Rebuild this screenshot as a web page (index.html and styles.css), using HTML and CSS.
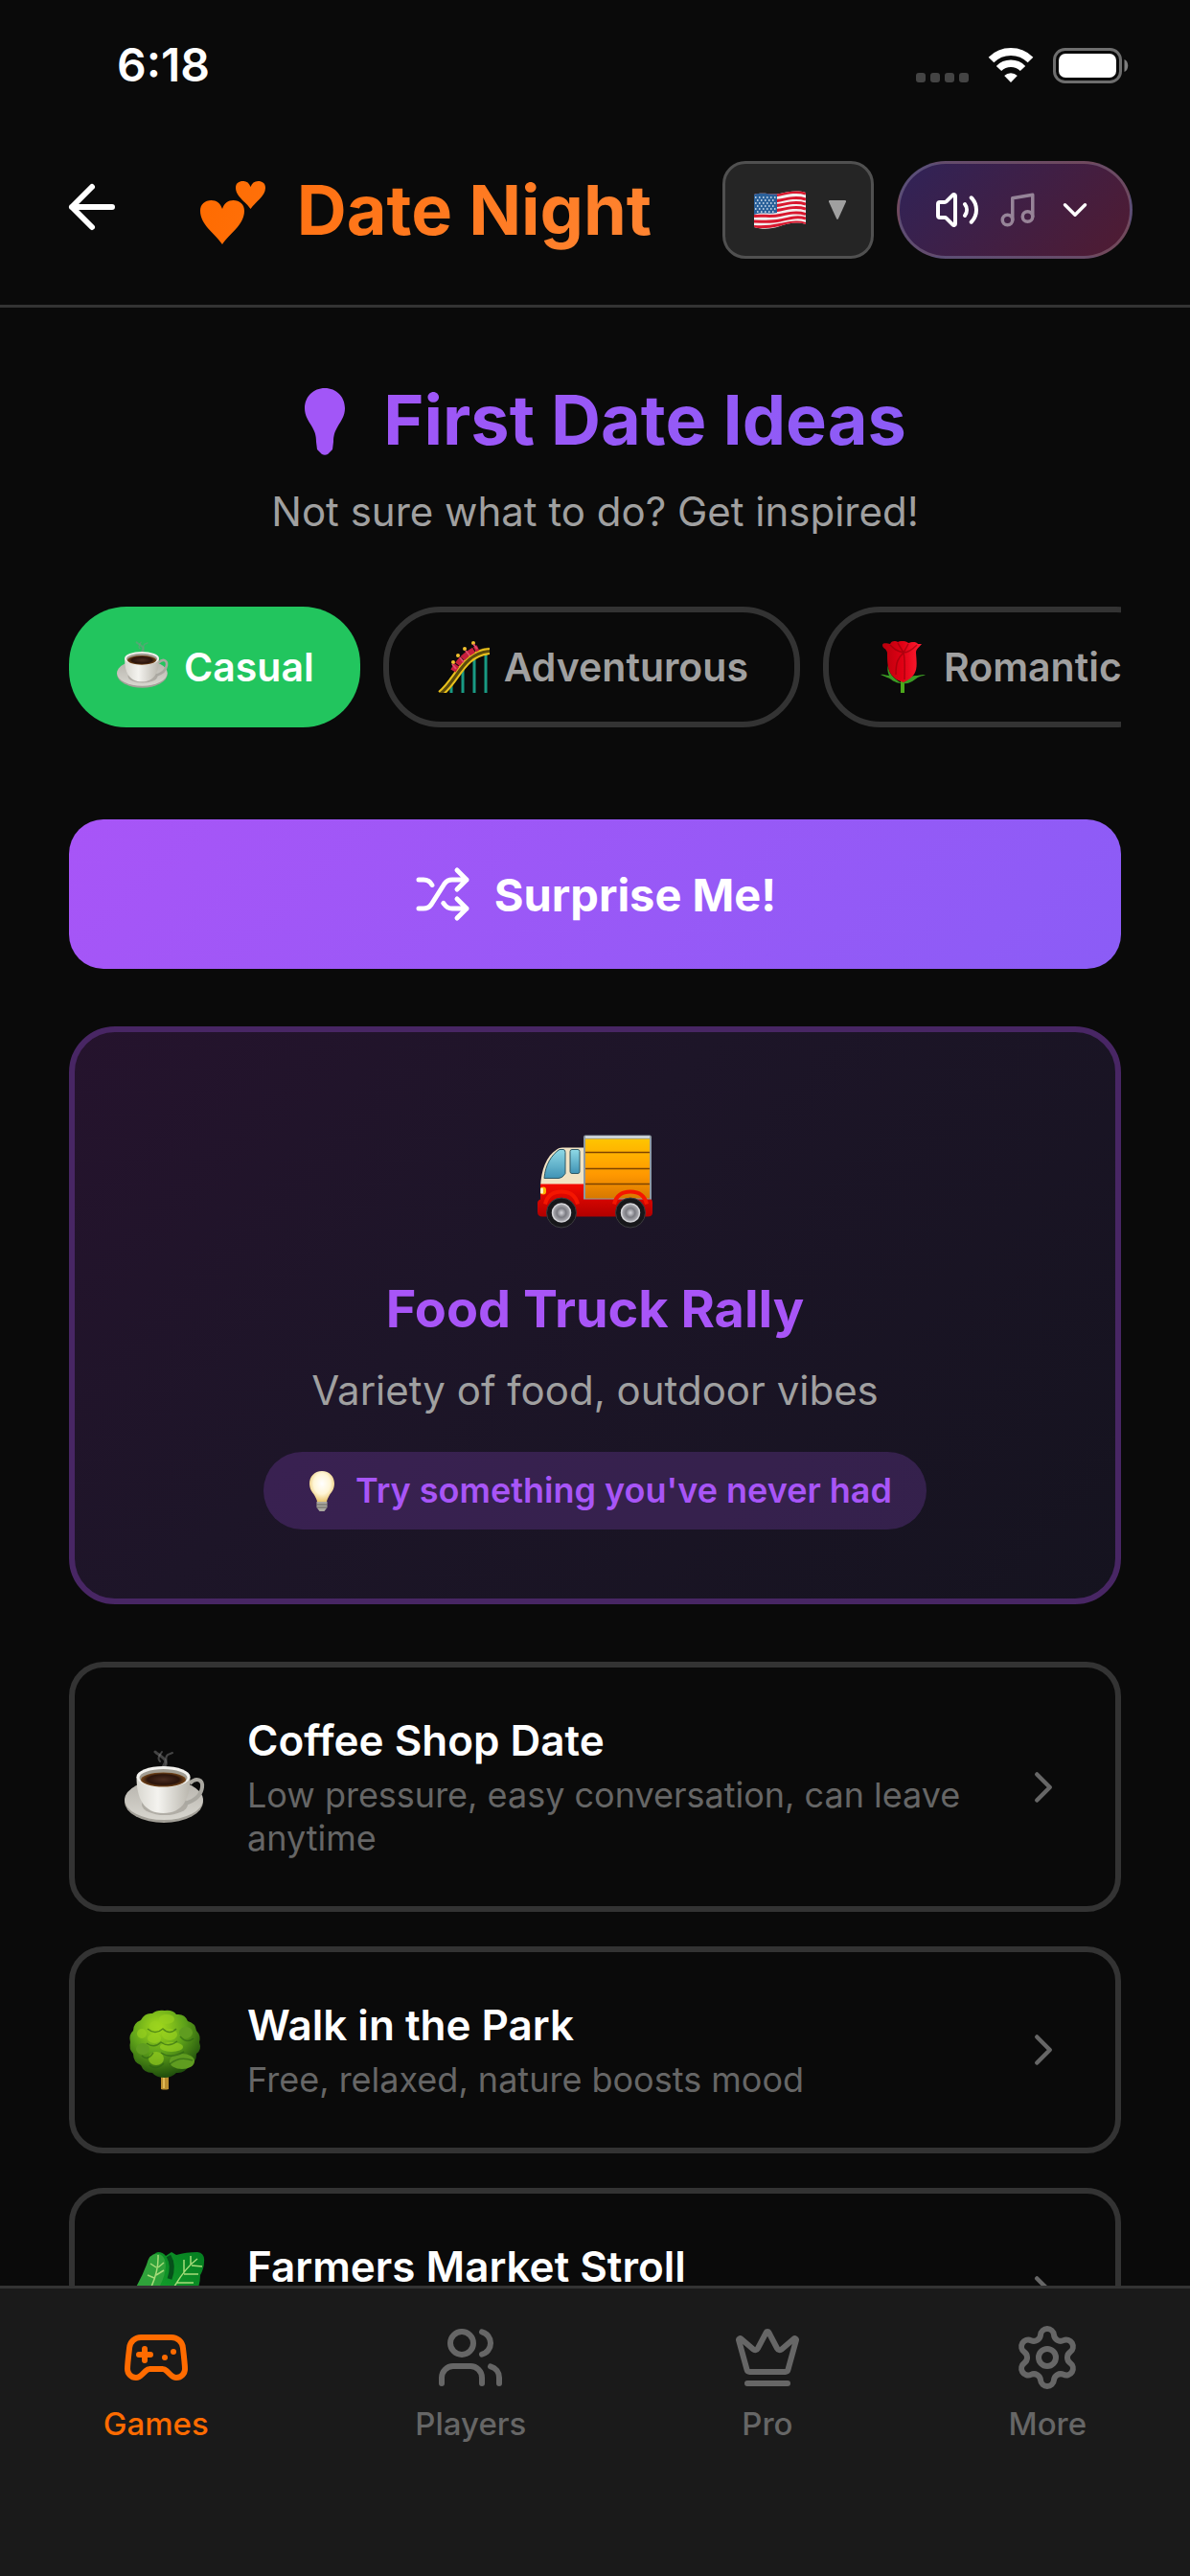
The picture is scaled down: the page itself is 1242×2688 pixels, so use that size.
FILE: index.html
```html
<!DOCTYPE html>
<html lang="en">
<head>
<meta charset="utf-8">
<meta name="viewport" content="width=device-width, initial-scale=1">
<title>Date Night</title>
<link rel="stylesheet" href="styles.css">
</head>
<body>
<svg class="sprite" width="0" height="0" aria-hidden="true">
  <defs>
    <linearGradient id="g-hearts" gradientUnits="userSpaceOnUse" x1="0" y1="0" x2="400" y2="60"><stop offset="0" stop-color="#ff6b00"/><stop offset="1" stop-color="#ff8533"/></linearGradient>
    <linearGradient id="g-cup" x1="0" x2="1"><stop offset="0" stop-color="#d9d7d0"/><stop offset=".4" stop-color="#f4f3ef"/><stop offset="1" stop-color="#b9b6ad"/></linearGradient>
    <linearGradient id="g-saucer" x1="0" x2="0" y1="0" y2="1"><stop offset="0" stop-color="#b5b2ab"/><stop offset="1" stop-color="#d8d6cf"/></linearGradient>
    <radialGradient id="g-coffee"><stop offset="0" stop-color="#4a2c20"/><stop offset=".7" stop-color="#2b140b"/><stop offset="1" stop-color="#7a4a1c"/></radialGradient>
    <linearGradient id="g-box" x1="0" x2="0" y1="0" y2="1"><stop offset="0" stop-color="#ffc400"/><stop offset=".6" stop-color="#ff9800"/><stop offset="1" stop-color="#d77800"/></linearGradient>
    <linearGradient id="g-red" x1="0" x2="0" y1="0" y2="1"><stop offset="0" stop-color="#f50a00"/><stop offset="1" stop-color="#b00000"/></linearGradient>
    <linearGradient id="g-glass" x1="0" x2="0" y1="0" y2="1"><stop offset="0" stop-color="#8fd9e6"/><stop offset="1" stop-color="#3f93b5"/></linearGradient>
    <radialGradient id="g-hub"><stop offset="0" stop-color="#d5d5da"/><stop offset=".5" stop-color="#7b7b82"/><stop offset="1" stop-color="#b6b6bb"/></radialGradient>
    <radialGradient id="g-bulb" cx=".5" cy=".4" r=".6"><stop offset="0" stop-color="#ffffff"/><stop offset=".55" stop-color="#fff6d6"/><stop offset="1" stop-color="#e6bf62"/></radialGradient>
    <radialGradient id="g-tree" cx=".4" cy=".25" r=".75"><stop offset="0" stop-color="#a6dc1c"/><stop offset=".5" stop-color="#5fa31a"/><stop offset="1" stop-color="#1e4d0c"/></radialGradient>
    <linearGradient id="g-leaf" x1="1" x2="0" y1="0" y2="1"><stop offset="0" stop-color="#047d20"/><stop offset=".6" stop-color="#149f2b"/><stop offset="1" stop-color="#b5e67c"/></linearGradient>
    <linearGradient id="g-rose" x1="0" x2="1"><stop offset="0" stop-color="#b8000c"/><stop offset=".5" stop-color="#e00014"/><stop offset="1" stop-color="#ff1f33"/></linearGradient>
  </defs>
  <symbol id="cup" viewBox="0 0 84 78">
    <g fill="none" stroke="#8c8c8c" stroke-opacity=".45" stroke-linecap="round"><path d="M41 22c-4-6 5-8 0-13s-6-4-9-7" stroke-width="3"/><path d="M42 18c5-5-2-8 3-13l5-2M37 12c-3-3-1-6 2-10" stroke-width="2"/></g>
    <ellipse cx="41" cy="54" rx="41" ry="22" fill="#a3a098"/><ellipse cx="41" cy="52" rx="41" ry="21" fill="url(#g-saucer)"/>
    <ellipse cx="42" cy="57" rx="24" ry="11" fill="#8f8c84" opacity=".5"/>
    <path d="M68 35c7-7 14-4 13 4s-8 14-18 17" fill="none" stroke="#aaa8a1" stroke-width="4"/>
    <path d="M12.500 28c0 22 7 38 28 38s28-16 28-38z" fill="url(#g-cup)"/>
    <ellipse cx="40.500" cy="28" rx="28" ry="11" fill="#f3f2ee"/><ellipse cx="40.500" cy="29" rx="25" ry="9" fill="#a19d93"/><ellipse cx="40.500" cy="31" rx="23.500" ry="7.500" fill="url(#g-coffee)"/>
  </symbol>
  <symbol id="bulb-shape" viewBox="0 0 42 70">
    <path d="M21 0C9 0 0 9 0 21c0 8 4 13 7.500 19S12 50 12 56l1 8 5 5c2 1 4 1 6 0l5-5 1-8c0-6 1-10 4.500-16S42 29 42 21C42 9 33 0 21 0z"/>
  </symbol>
</svg>

<div class="status-bar">
  <time class="clock">6:18</time>
  <div class="status-icons">
    <svg width="55" height="37" viewBox="0 0 55 37" fill="#444" aria-hidden="true"><rect y="26" width="10" height="10" rx="3"/><rect x="15" y="26" width="10" height="10" rx="3"/><rect x="30" y="26" width="10" height="10" rx="3"/><rect x="45" y="26" width="10" height="10" rx="3"/></svg>
    <svg width="48" height="37" viewBox="0 0 48 37" aria-hidden="true"><g fill="none" stroke="#fff"><path d="M3.500 12.500a29 29 0 0 1 41 0" stroke-width="8"/><path d="M11.500 21.500a17.500 17.500 0 0 1 25 0" stroke-width="7.500"/></g><path d="M17.200 29a10 10 0 0 1 13.600 0L24 36z" fill="#fff"/></svg>
    <svg width="79" height="37" viewBox="0 0 79 37" aria-hidden="true"><rect x="1.500" y="1.500" width="69" height="34" rx="11" fill="none" stroke="#6e6e6e" stroke-width="3"/><rect x="6" y="6" width="60" height="25" rx="7" fill="#fff"/><path d="M74.500 12c5 1.500 5 11.500 0 13z" fill="#7e7e7e"/></svg>
  </div>
</div>

<header class="app-header">
  <button class="back" type="button" aria-label="Back"><svg class="line" viewBox="0 0 24 24"><path d="m12 19-7-7 7-7M19 12H5"/></svg></button>
  <h1 class="app-title">
    <svg class="title-icon" viewBox="0 0 82 72" fill="url(#g-hearts)" aria-hidden="true"><path d="M26 72C19 61 3 52 3 37c0-7 5-11 11.500-11C20 26 24 29 26 35c2-6 6-9 11.500-9C44 26 49 30 49 37c0 15-16 24-23 35z"/><path d="M55.500 35C51 28 40 22 40 13c0-5 3.500-7 7.500-7s6.500 2 8 6c1.500-4 4-6 8-6s7.500 2 7.500 7c0 9-11 15-15.500 22z"/></svg>
    <span class="orange-text">Date Night</span>
  </h1>
  <div class="header-actions">
    <button class="language" type="button" aria-label="Language: English (US)" aria-haspopup="listbox">
      <svg width="54" height="40" viewBox="0 0 54 40" aria-hidden="true">
        <clipPath id="flag-clip"><path d="M0 4c10-3 18 1 27-1s18-4 27-1v33c-10-3-18-1-27 2s-18 4-27 1z"/></clipPath>
        <g clip-path="url(#flag-clip)"><rect width="54" height="40" fill="#f3eeee"/>
        <g fill="none" stroke="#d8172e" stroke-width="3"><path d="M0 5c10-3 18 1 27-1s18-4 27-1M0 11c10-3 18 1 27-1s18-4 27-1M0 16c10-3 18 1 27-1s18-4 27-1M0 21c10-3 18 1 27-1s18-4 27-1M0 26.500c10-1 18 1 27-1s18-4 27-1M0 32c10 0 18 1 27-1s18-5 27-2M0 37.500c10 1 18 0 27-2s18-4 27-1"/></g>
        <path d="M0 2c8-1 16 2 24 0v21c-8 2-16-1-24 2z" fill="#2a6099"/>
        <g stroke="#dfe9f3" stroke-width="1.500" stroke-dasharray="1.500 2.500"><path d="M1 7h22M3 10h20M1 13h22M3 16h20M1 19h22M3 22h20"/></g></g>
      </svg>
      <svg width="18" height="20" viewBox="0 0 18 20" fill="#a0a0a0" aria-hidden="true"><path d="M1 0h16q1.500 0 1 1.500L10 19q-1 2-2 0L0 1.500Q-.5 0 1 0z"/></svg>
    </button>
    <button class="audio" type="button" aria-label="Sound and music" aria-haspopup="menu">
      <svg class="line icon-48" viewBox="0 0 24 24"><path d="M11 4.702a.705.705 0 0 0-1.203-.498L6.413 7.587A1.400 1.400 0 0 1 5.416 8H3a1 1 0 0 0-1 1v6a1 1 0 0 0 1 1h2.416a1.400 1.400 0 0 1 .997.413l3.383 3.384A.705.705 0 0 0 11 19.298zM16 9a5 5 0 0 1 0 6M19.364 18.364a9 9 0 0 0 0-12.728"/></svg>
      <svg class="line icon-42 muted" viewBox="0 0 24 24"><path d="M9 18V5l12-2v13"/><circle cx="6" cy="18" r="3"/><circle cx="18" cy="16" r="3"/></svg>
      <svg class="line icon-42" viewBox="0 0 24 24"><path d="m6 9 6 6 6-6"/></svg>
    </button>
  </div>
</header>

<main class="content">
  <section class="intro">
    <h2 class="intro-title">
      <svg class="title-icon" viewBox="0 0 82 72" fill="#a256f7" aria-hidden="true"><use href="#bulb-shape" x="22" y="3" width="42" height="70"/></svg>
      <span class="purple-text">First Date Ideas</span>
    </h2>
    <p class="intro-text">Not sure what to do? Get inspired!</p>
  </section>

  <div class="chips" role="group" aria-label="Date type">
    <button class="chip chip-active" type="button" aria-pressed="true"><svg class="chip-icon" viewBox="0 0 57 54" aria-hidden="true"><use href="#cup" x="2" y="0" width="54" height="50"/></svg>Casual</button>
    <button class="chip" type="button" aria-pressed="false">
      <svg class="chip-icon" viewBox="0 0 57 54" aria-hidden="true"><path d="M17 38v16M29 24v30M41 12v42M53 7v47" stroke="#199a83" stroke-width="3"/><path d="M6 55C24 40 28 12 57 10" fill="none" stroke="#5b4a0c" stroke-width="7"/><path d="M4 53C22 38 28 10 57 8M8 56C26 42 30 16 57 13" fill="none" stroke="#e8c01c" stroke-width="2"/><path d="M19 31Q28 15 45 7" fill="none" stroke="#c81f3c" stroke-width="6" stroke-dasharray="7 1"/><g fill="#f2c12e"><circle cx="19" cy="22" r="2"/><circle cx="24" cy="15" r="2"/><circle cx="31" cy="8" r="2"/><circle cx="40" cy="2" r="2"/></g><path d="m18 24 4 5m4-12 4 5m2-12 4 5m4-12 4 5" stroke="#e34b6c" stroke-width="2"/></svg>Adventurous</button>
    <button class="chip" type="button" aria-pressed="false">
      <svg class="chip-icon" viewBox="0 0 57 54" aria-hidden="true"><path d="M29 38v16" stroke="#4ca81c" stroke-width="4"/><path d="M14 25c0 7 4 13 14 19-8 0-11-5-15-6l-7-3c4-1 6 1 9 1-2-4-2-8-1-11zM44 36c3 0 6-2 9 0-5 0-7 1-11 4s-8 5-13 4c4-3 8-9 15-8z" fill="#3b9a24"/><path d="M13 12C12 7 8 8 8 4c1-3 6-1 8-1 2-4 6-3 8-2 4-2 9-1 11 1 3-1 8-2 10 1l4 0c-3 4-6 5-6 9 1 15 3 24-13 31C14 38 13 28 13 12z" fill="url(#g-rose)"/><path d="M16 4c4 4 6 6 14 8 2 8 1 20 1 28M44 4c-5 5-10 8-14 8-6 6-8 10-8 23M24 2l6 10 5-9" fill="none" stroke="#8d0009" stroke-opacity=".6" stroke-width="1.500"/></svg>Romantic</button>
  </div>

  <button class="surprise" type="button"><svg class="line icon-60" viewBox="0 0 24 24"><path d="m18 14 4 4-4 4M18 2l4 4-4 4M2 18h1.973a4 4 0 0 0 3.300-1.700l5.454-8.600a4 4 0 0 1 3.300-1.700H22M2 6h1.972a4 4 0 0 1 3.600 2.200M22 18h-6.041a4 4 0 0 1-3.300-1.800l-.359-.45"/></svg>Surprise Me!</button>

  <article class="feature">
    <svg class="feature-icon" viewBox="0 0 120 97" aria-hidden="true">
      <rect x="48" y="0" width="71" height="70" rx="2" fill="#8e9aa3"/><rect x="50" y="4" width="67" height="62" fill="url(#g-box)"/><path d="M50 2h67" stroke="#dfe4e8" stroke-width="2"/><path d="M50 18h67M50 35h67M50 51h67" stroke="#7d4300" stroke-width="1.500"/>
      <path d="M3 54C4 36 9 22 20 15q2-2 6-2h22v42z" fill="#f1e3c4"/><path d="M7 45C8 31 15 20 23 15h4q2 0 2 3v22q-3 5-7 5z" fill="url(#g-glass)" stroke="#2e5966"/><rect x="34" y="15" width="10" height="25" rx="2" fill="url(#g-glass)" stroke="#2e5966"/>
      <path d="M3 51h45v16h70q2 0 2 4v10q0 4-5 4H5q-5 0-5-5v-9q0-3 3-4z" fill="url(#g-red)"/><path d="M8 72q3-13 17-13t17 13M80 72q3-13 17-13t17 13" stroke="#f51600" stroke-width="4" fill="none"/><rect x="3" y="54" width="6" height="8" rx="3" fill="#ffb300"/><rect x="3" y="55" width="3" height="6" rx="1" fill="#fff1c0"/>
      <g fill="#17171a" stroke="#3c3c3f"><circle cx="25" cy="81" r="15.500"/><circle cx="97" cy="81" r="15.500"/></g><g fill="url(#g-hub)" stroke="#d4d4d8" stroke-width="1.500"><circle cx="25" cy="81" r="9.500"/><circle cx="97" cy="81" r="9.500"/></g>
    </svg>
    <h3 class="feature-title">Food Truck Rally</h3>
    <p class="feature-text">Variety of food, outdoor vibes</p>
    <p class="tip"><svg width="48" height="42" viewBox="0 0 48 42" aria-hidden="true"><path d="M25 0c-8 0-13 6-13 13 0 6 3 9 5 12 2 4 3 5 3 8h10c0-3 1-4 3-8 2-3 5-6 5-12C38 6 33 0 25 0z" fill="url(#g-bulb)"/><path d="M19.500 32h11v6l-3 4h-5l-3-4z" fill="#aaa89f"/><path d="M19.500 35h11M20 38h10" stroke="#66645e"/></svg>Try something you've never had</p>
  </article>

  <div class="ideas">
    <button class="idea" type="button">
      <svg class="idea-icon" viewBox="0 0 96 84" aria-hidden="true"><use href="#cup" x="4" y="3" width="84" height="78"/></svg>
      <span class="idea-body"><span class="idea-title">Coffee Shop Date</span><span class="idea-text">Low pressure, easy conversation, can leave anytime</span></span>
      <svg class="line chevron" viewBox="0 0 24 24"><path d="m9 18 6-6-6-6"/></svg>
    </button>
    <button class="idea" type="button">
      <svg class="idea-icon" viewBox="0 0 96 84" aria-hidden="true"><path d="M42 66h8v17q-4 1-8 0z" fill="#b98d2e"/><path d="M45 66v16" stroke="#e0b955" stroke-width="2"/>
        <path d="M46 1q8-1 12 4 9-1 12 7 8 2 9 10 5 5 3 12 3 8-3 12 0 10-8 12-4 9-13 8-5 5-12 5-9 0-13-5-9 0-12-8-8-3-8-12-5-5-3-12-2-8 3-12 0-8 8-11 4-8 12-7 5-4 13-3z" fill="url(#g-tree)"/>
        <g fill="#98d11f" opacity=".65"><ellipse cx="36" cy="17" rx="6" ry="5"/><ellipse cx="48" cy="10" rx="8" ry="5"/><ellipse cx="51" cy="26" rx="8" ry="6"/><ellipse cx="35" cy="30" rx="7" ry="5"/><ellipse cx="53" cy="39" rx="12" ry="5"/><ellipse cx="37" cy="51" rx="8" ry="7"/><ellipse cx="22" cy="25" rx="5" ry="5"/></g><g fill="#5f9c20"><ellipse cx="64" cy="54" rx="13" ry="8"/><ellipse cx="68" cy="24" rx="7" ry="6"/><ellipse cx="23" cy="41" rx="7" ry="6"/></g>
        <g fill="none" stroke="#2a6112" stroke-opacity=".6" stroke-width="1.500"><path d="M28 20q8 7 16 0 7 7 14 0M27 35q8 6 15-1 8 6 17-1M22 48q6 6 12-3M42 45q10 7 24-1M30 58q7 6 15-2M51 57q10-9 24-4M62 28q7 8 14 2"/></g></svg>
      <span class="idea-body"><span class="idea-title">Walk in the Park</span><span class="idea-text">Free, relaxed, nature boosts mood</span></span>
      <svg class="line chevron" viewBox="0 0 24 24"><path d="m9 18 6-6-6-6"/></svg>
    </button>
    <button class="idea" type="button">
      <svg class="idea-icon" viewBox="0 0 96 84" aria-hidden="true"><path d="M25 30Q30 2 39 1q5 0 8 4l6-4 5 3q10-3 22-3 8 1 7 10 0 7-4 14 0 20-20 40-20 20-40 17-17-3-12-18z" fill="url(#g-leaf)"/><path d="M27 14Q30 1 40 3c10 3 8 20 1 33L12 44q9-14 15-30z" fill="#2fa23a"/><path d="M50 5q6 10 1 24" stroke="#06501a" stroke-width="5" fill="none"/><g fill="none" stroke="#a7dc7a" stroke-width="1.500"><path d="M39 4q1 25-18 52M39 17l6-5M37 25l8-5M37 17l-6-4M35 28l-7-3M80 8Q64 20 50 48M73 14V5M66 22V9M74 15l11 1M66 24h15M59 33h17"/></g><path d="M14 64q6-20 14-25 8 15-5 40-12-3-9-15z" fill="#dff0b9"/></svg>
      <span class="idea-body"><span class="idea-title">Farmers Market Stroll</span><span class="idea-text"></span></span>
      <svg class="line chevron" viewBox="0 0 24 24"><path d="m9 18 6-6-6-6"/></svg>
    </button>
  </div>
</main>

<nav class="tab-bar" aria-label="Main">
  <a class="tab tab-active" href="#games" aria-current="page"><svg class="line icon-72" viewBox="0 0 24 24"><path d="M6 11h4M8 9v4M15 12h.01M18 10h.01M17.320 5H6.680a4 4 0 0 0-3.978 3.590c-.006.052-.01.101-.017.152C2.604 9.416 2 14.456 2 16a3 3 0 0 0 3 3c1 0 1.500-.5 2-1l1.414-1.414A2 2 0 0 1 9.828 16h4.344a2 2 0 0 1 1.414.586L17 18c.5.500 1 1 2 1a3 3 0 0 0 3-3c0-1.545-.604-6.584-.685-7.258-.007-.05-.011-.1-.017-.151A4 4 0 0 0 17.320 5z"/></svg>Games</a>
  <a class="tab" href="#players"><svg class="line icon-72" viewBox="0 0 24 24"><path d="M16 21v-2a4 4 0 0 0-4-4H6a4 4 0 0 0-4 4v2M22 21v-2a4 4 0 0 0-3-3.870M16 3.130a4 4 0 0 1 0 7.750"/><circle cx="9" cy="7" r="4"/></svg>Players</a>
  <a class="tab" href="#pro"><svg class="line icon-72" viewBox="0 0 24 24"><path d="M11.562 3.266a.5.5 0 0 1 .876 0L15.390 8.870a1 1 0 0 0 1.516.294L21.183 5.500a.5.5 0 0 1 .798.519l-2.834 10.246a1 1 0 0 1-.956.734H5.810a1 1 0 0 1-.957-.734L2.020 6.020a.5.5 0 0 1 .798-.519l4.276 3.664a1 1 0 0 0 1.516-.294zM5 21h14"/></svg>Pro</a>
  <a class="tab" href="#more"><svg class="line icon-72" viewBox="0 0 24 24"><path d="M9.671 4.136a2.340 2.340 0 0 1 4.659 0 2.340 2.340 0 0 0 3.319 1.915 2.340 2.340 0 0 1 2.330 4.033 2.340 2.340 0 0 0 0 3.831 2.340 2.340 0 0 1-2.330 4.033 2.340 2.340 0 0 0-3.319 1.915 2.340 2.340 0 0 1-4.659 0 2.340 2.340 0 0 0-3.320-1.915 2.340 2.340 0 0 1-2.330-4.033 2.340 2.340 0 0 0 0-3.831A2.340 2.340 0 0 1 6.350 6.051a2.340 2.340 0 0 0 3.319-1.915"/><circle cx="12" cy="12" r="3"/></svg>More</a>
</nav>
</body>
</html>
```
FILE: styles.css
```css
* { box-sizing: border-box; }
html { height: 100%; background: #0a0a0a; }
body {
  margin: 0;
  height: 100%;
  display: flex;
  flex-direction: column;
  overflow: hidden;
  background: #0a0a0a;
  color: #fff;
  font-family: Inter, "Liberation Sans", sans-serif;
}
h1, h2, h3, p { margin: 0; }
button { font: inherit; color: inherit; background: none; border: 0; padding: 0; margin: 0; cursor: pointer; }
svg { display: block; flex: none; }
.sprite { position: absolute; }

.line { fill: none; stroke: currentColor; stroke-width: 2; stroke-linecap: round; stroke-linejoin: round; }
.icon-42 { width: 42px; height: 42px; }
.icon-48 { width: 48px; height: 48px; }
.icon-60 { width: 60px; height: 60px; }
.icon-72 { width: 72px; height: 72px; }
.muted { opacity: .45; }

.status-bar {
  flex: none;
  display: flex;
  align-items: center;
  justify-content: space-between;
  height: 132px;
  padding: 4px 64px 0 122px;
}
.clock { font-size: 48px; font-weight: 600; line-height: 60px; }
.status-icons { display: flex; gap: 20px; }

.app-header {
  flex: none;
  display: flex;
  align-items: center;
  justify-content: space-between;
  padding: 36px 60px 48px;
  border-bottom: 3px solid #333;
}
.back { padding-bottom: 6px; }
.back svg { width: 72px; height: 72px; }
.app-title, .intro-title {
  display: flex;
  align-items: center;
  justify-content: center;
  gap: 22px;
  font-size: 72px;
  font-weight: 700;
  line-height: 90px;
  white-space: nowrap;
}
.title-icon { width: 82px; height: 72px; overflow: visible; }
.orange-text, .purple-text { background-clip: text; -webkit-background-clip: text; color: transparent; }
.orange-text { background-image: linear-gradient(135deg, #ff7010, #ff8533); }
.purple-text { background-image: linear-gradient(135deg, #a156f7, #8b5cf6); }
.header-actions { display: flex; gap: 24px; }
.language {
  display: flex;
  align-items: center;
  gap: 24px;
  height: 102px;
  padding: 0 26px 0 30px;
  border: 3px solid #505050;
  border-radius: 24px;
  background: #252525;
}
.audio {
  display: flex;
  align-items: center;
  gap: 18px;
  height: 102px;
  padding: 0 36px;
  border: 3px solid rgba(255, 255, 255, .2);
  border-radius: 51px;
  background: linear-gradient(135deg, #302358, #501b31);
}

.content { flex: 1; min-height: 0; overflow: hidden; padding: 72px 72px 0; }
.intro { text-align: center; margin-bottom: 72px; }
.intro-text { margin-top: 24px; font-size: 42px; line-height: 54px; color: #a0a0a0; }

.chips { display: flex; gap: 24px; margin-bottom: 96px; overflow: hidden; }
.chip {
  flex: none;
  display: flex;
  align-items: center;
  gap: 15px;
  height: 126px;
  padding: 0 48px;
  border: 6px solid #333;
  border-radius: 60px;
  font-size: 41px;
  font-weight: 600;
  color: #a0a0a0;
}
.chip-active { border: 0; background: #22c55e; color: #fff; }
.chip-icon { width: 57px; height: 54px; }

.surprise {
  display: flex;
  align-items: center;
  justify-content: center;
  gap: 24px;
  width: 100%;
  height: 156px;
  margin-bottom: 60px;
  border-radius: 36px;
  background: linear-gradient(135deg, #a855f7, #8b5cf6);
  font-size: 47px;
  font-weight: 700;
}

.feature {
  display: flex;
  flex-direction: column;
  align-items: center;
  padding: 72px;
  margin-bottom: 60px;
  border: 6px solid #482664;
  border-radius: 48px;
  background: linear-gradient(135deg, #25132d, #1d1528 40%, #15131f);
  text-align: center;
}
.feature-icon { width: 120px; height: 168px; }
.feature-title { margin-top: 16px; font-size: 54px; line-height: 66px; font-weight: 700; color: #a855f7; }
.feature-text { margin-top: 24px; font-size: 42px; line-height: 56px; color: #a0a0a0; }
.tip {
  display: flex;
  align-items: center;
  gap: 12px;
  margin-top: 36px;
  padding: 18px 36px;
  border-radius: 42px;
  background: rgba(168, 85, 247, .2);
  font-size: 36px;
  line-height: 45px;
  font-weight: 600;
  color: #a855f7;
}

.ideas { display: flex; flex-direction: column; gap: 36px; }
.idea {
  display: flex;
  align-items: center;
  gap: 36px;
  padding: 48px;
  border: 6px solid #333;
  border-radius: 36px;
  text-align: left;
}
.idea-icon { width: 96px; height: 84px; }
.idea-body { flex: 1; display: flex; flex-direction: column; gap: 6px; }
.idea-title { font-size: 44px; line-height: 57px; font-weight: 600; }
.idea-text { min-height: 45px; font-size: 36px; line-height: 45px; color: #666; }
.chevron { width: 54px; height: 54px; color: #666; }

.tab-bar {
  flex: none;
  display: flex;
  justify-content: space-around;
  padding: 36px 0 138px;
  border-top: 3px solid #333;
  background: #1a1a1a;
}
.tab {
  display: flex;
  flex-direction: column;
  align-items: center;
  gap: 12px;
  font-size: 33px;
  line-height: 42px;
  font-weight: 500;
  color: #666;
  text-decoration: none;
}
.tab-active { color: #ff6b00; }
```
